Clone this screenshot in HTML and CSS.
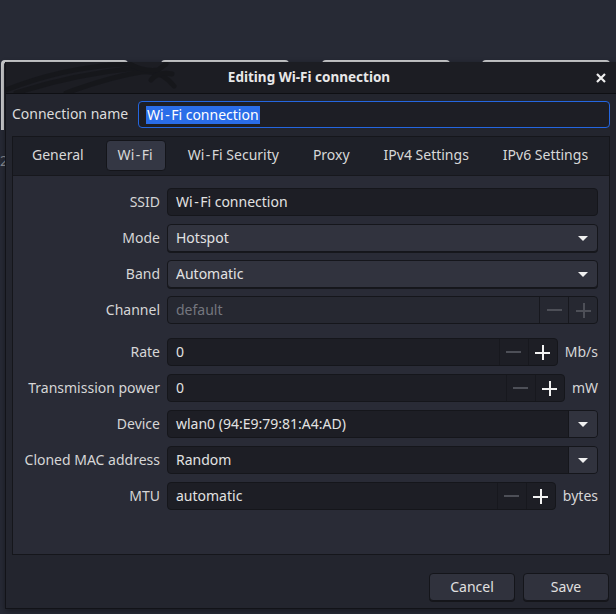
FILE: index.html
```html
<!DOCTYPE html>
<html>
<head>
<meta charset="utf-8">
<link rel="stylesheet" href="styles.css">
</head>
<body>
<div class="desktop">
  <div class="bgwin w1"></div>
  <div class="bgwin w2"></div>
  <div class="bgwin w3"></div>
  <div class="bgwin w4"></div>
  <span class="bgnum">2</span>

  <div class="dialog">
    <div class="titlebar">
      <svg class="dragon" width="260" height="31" viewBox="0 0 260 31">
        <path d="M0 28 C40 12 80 4 120 2" />
        <path d="M10 31 C50 18 90 10 130 6" />
        <path d="M60 31 C90 20 110 14 135 10 C150 8 160 14 168 24" />
        <path d="M120 0 C130 6 140 10 152 8 L160 2" />
        <path d="M145 18 C150 12 158 10 166 12" />
      </svg>
      <span class="title">Editing Wi-Fi connection</span>
      <svg class="close" width="10" height="10" viewBox="0 0 10 10"><path d="M1 1 L9 9 M9 1 L1 9"/></svg>
    </div>
    <div class="dbody">
      <div class="namerow">
        <span class="namelabel">Connection name</span>
        <div class="entry focus"><span class="sel">Wi<span class="hy">-</span>Fi connection</span></div>
      </div>

      <div class="notebook">
        <div class="tabs">
          <span class="tab">General</span>
          <span class="tab active">Wi<span class="hy">-</span>Fi</span>
          <span class="tab">Wi<span class="hy">-</span>Fi Security</span>
          <span class="tab">Proxy</span>
          <span class="tab">IPv4 Settings</span>
          <span class="tab">IPv6 Settings</span>
        </div>
        <div class="panel">
          <div class="form">
            <span class="lbl">SSID</span>
            <div class="entry"><span class="val">Wi<span class="hy">-</span>Fi connection</span></div>

            <span class="lbl">Mode</span>
            <div class="combo"><span class="val">Hotspot</span><span class="arrow"></span></div>

            <span class="lbl">Band</span>
            <div class="combo"><span class="val">Automatic</span><span class="arrow"></span></div>

            <span class="lbl">Channel</span>
            <div class="entry disabled">
              <span class="val dim">default</span>
              <span class="spin"><span class="minus"></span></span>
              <span class="spin"><span class="plus dimplus"></span></span>
            </div>

            <span class="lbl gap">Rate</span>
            <div class="unitrow gap">
              <div class="entry">
                <span class="val">0</span>
                <span class="spin"><span class="minus"></span></span>
                <span class="spin"><span class="plus"></span></span>
              </div>
              <span class="unit">Mb/s</span>
            </div>

            <span class="lbl">Transmission power</span>
            <div class="unitrow">
              <div class="entry">
                <span class="val">0</span>
                <span class="spin"><span class="minus"></span></span>
                <span class="spin"><span class="plus"></span></span>
              </div>
              <span class="unit">mW</span>
            </div>

            <span class="lbl">Device</span>
            <div class="entry">
              <span class="val">wlan0 (94:E9:79:81:A4:AD)</span>
              <span class="dropbtn"><span class="arrow"></span></span>
            </div>

            <span class="lbl">Cloned MAC address</span>
            <div class="entry">
              <span class="val">Random</span>
              <span class="dropbtn"><span class="arrow"></span></span>
            </div>

            <span class="lbl">MTU</span>
            <div class="unitrow">
              <div class="entry">
                <span class="val">automatic</span>
                <span class="spin"><span class="minus"></span></span>
                <span class="spin"><span class="plus"></span></span>
              </div>
              <span class="unit">bytes</span>
            </div>
          </div>
        </div>
      </div>

      <div class="actions">
        <button class="btn">Cancel</button>
        <button class="btn">Save</button>
      </div>
    </div>
  </div>
</div>
</body>
</html>
```

FILE: styles.css
```css
* { box-sizing: border-box; }
html, body {
  margin: 0;
  padding: 0;
  width: 616px;
  height: 614px;
  overflow: hidden;
  background: #272a35;
  font-family: "Noto Sans", "DejaVu Sans", sans-serif;
  font-size: 14px;
  color: #dedede;
}
.desktop {
  position: relative;
  width: 616px;
  height: 614px;
}
.bgwin {
  position: absolute;
  top: 60px;
  height: 80px;
  width: 128px;
  border-top: 3px solid #c9cacc;
  border-radius: 4px 4px 0 0;
  background: #24262f;
}
.w1 { left: 1px; width: 127px; height: 70px; border-left: 3px solid #c9cacc; }
.w2 { left: 161px; }
.w3 { left: 322px; }
.w4 { left: 482px; width: 128px; }
.bgnum {
  position: absolute;
  left: 0;
  top: 151px;
  font-size: 14px;
  color: #8a8c92;
}

.dialog {
  position: absolute;
  left: 5px;
  top: 62px;
  width: 612px;
  height: 547px;
  background: #23252e;
  border-left: 1px solid #121318;
  border-bottom: 1px solid #121318;
  display: flex;
  flex-direction: column;
  box-shadow: 0 2px 6px rgba(0,0,0,0.4);
}
.titlebar {
  position: relative;
  height: 32px;
  flex: none;
  background: #1c1d23;
  border-bottom: 1px solid #0e0f13;
  display: flex;
  align-items: center;
  justify-content: center;
  overflow: hidden;
}
.dragon {
  position: absolute;
  left: 0;
  top: 0;
  fill: none;
  stroke: #141519;
  stroke-width: 5;
  stroke-linecap: round;
  opacity: 0.7;
}
.title {
  position: relative;
  font-weight: bold;
  font-size: 13.5px;
  color: #e8e8e8;
  margin-right: 5px;
  padding-bottom: 1px;
}
.close {
  position: absolute;
  right: 11px;
  top: 11px;
  stroke: #f0f0f0;
  stroke-width: 2.2;
}
.hy { padding: 0 1.5px; }

.dbody {
  flex: 1;
  display: flex;
  flex-direction: column;
  padding: 7px 7px 7px 6px;
}
.namerow {
  display: flex;
  align-items: center;
}
.namelabel {
  width: 126px;
  flex: none;
  color: #dcdcdc;
  white-space: nowrap;
  padding-bottom: 2px;
}
.entry {
  flex: 1;
  height: 28px;
  display: flex;
  align-items: center;
  background: #1d1e25;
  border: 1px solid #15161b;
  border-radius: 4px;
  overflow: hidden;
}
.entry.focus {
  border-color: #2466e0;
  height: 27px;
  padding-left: 7px;
}
.sel {
  background: #2a6de8;
  color: #ffffff;
  line-height: 18px;
  padding: 0 1px;
}
.notebook {
  flex: 1;
  margin-top: 8px;
  border: 1px solid #15161b;
  display: flex;
  flex-direction: column;
}
.tabs {
  height: 39px;
  flex: none;
  background: #1e2028;
  border-bottom: 1px solid #17181d;
  display: flex;
  align-items: flex-start;
  padding-left: 2px;
  padding-top: 3px;
}
.tab {
  margin: 0 5px;
  padding: 0 12px 2px;
  height: 31px;
  line-height: 29px;
  border-radius: 4px;
  color: #d8d8d8;
  white-space: nowrap;
}
.tab.active {
  background: #343744;
  border: 1px solid #14151a;
  line-height: 27px;
  padding: 0 12px 2px 11px;
}
.panel {
  flex: 1;
  background: #292b36;
  padding: 12px 11px 0 0;
}
.form {
  display: grid;
  grid-template-columns: 147px 1fr;
  column-gap: 7px;
  row-gap: 8px;
  align-items: center;
}
.lbl {
  text-align: right;
  color: #d6d6d6;
  white-space: nowrap;
  padding-bottom: 2px;
}
.gap { margin-top: 6px; }
.val {
  flex: 1;
  padding-left: 8px;
  padding-bottom: 2px;
  color: #e2e2e2;
  white-space: nowrap;
}
.val.dim { color: #74767e; }
.combo {
  height: 28px;
  display: flex;
  align-items: center;
  background: #31333e;
  border: 1px solid #15161b;
  border-radius: 4px;
  box-shadow: 0 1px 0 #16171c;
}
.arrow {
  width: 0;
  height: 0;
  border-left: 5px solid transparent;
  border-right: 5px solid transparent;
  border-top: 5px solid #f0f0f0;
  margin-right: 9px;
}
.spin {
  width: 29px;
  height: 100%;
  flex: none;
  border-left: 1px solid #17181e;
  display: flex;
  align-items: center;
  justify-content: center;
}
.minus {
  width: 15px;
  height: 2px;
  background: #4d4f57;
}
.plus {
  position: relative;
  width: 15px;
  height: 15px;
}
.plus::before, .plus::after {
  content: "";
  position: absolute;
  background: #f2f2f2;
}
.plus::before { left: 0; top: 7px; width: 15px; height: 2px; }
.plus::after { left: 7px; top: 0; width: 2px; height: 15px; }
.dimplus::before, .dimplus::after { background: #4d4f57; }
.entry.disabled { background: #262831; }
.dropbtn {
  width: 29px;
  height: 100%;
  flex: none;
  background: #31333e;
  border-left: 1px solid #15161b;
  display: flex;
  align-items: center;
  justify-content: center;
}
.dropbtn .arrow { margin-right: 0; }
.unitrow {
  display: flex;
  align-items: center;
  gap: 7px;
  height: 28px;
}
.unitrow .entry { height: 28px; }
.unit { color: #d6d6d6; padding-bottom: 2px; }

.actions {
  display: flex;
  justify-content: flex-end;
  gap: 8px;
  margin-top: 18px;
  padding-right: 1px;
}
.btn {
  width: 86px;
  height: 28px;
  font-family: inherit;
  font-size: 14px;
  color: #e0e0e0;
  background: #30323d;
  border: 1px solid #14151a;
  border-radius: 4px;
  box-shadow: 0 1px 0 #15161a;
  padding-bottom: 2px;
}
```
